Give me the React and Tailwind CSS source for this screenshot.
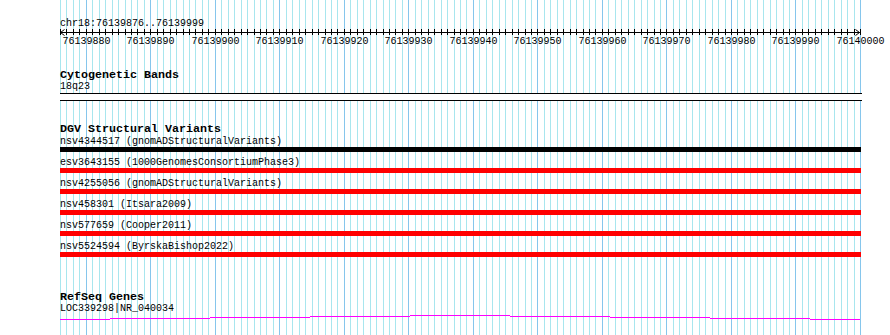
import React from 'react';

const start = 76139876;
const end = 76139999;
const left = 60;
const width = 800;
const bases = end - start + 1;
const pxPerBase = width / bases;

// one grid line per base, darker every 10 bp
const gridLines = Array.from({ length: bases + 1 }, (_, i) => ({
  x: Math.round(left + i * pxPerBase) + 0.5,
  major: (start + i) % 10 === 0,
}));

const rulerLabels = gridLines
  .map((g, i) => ({ ...g, pos: start + i }))
  .filter(g => g.major);

const variants = [
  { name: 'nsv4344517 (gnomADStructuralVariants)', color: 'bg-black' },
  { name: 'esv3643155 (1000GenomesConsortiumPhase3)', color: 'bg-[#ff0000]' },
  { name: 'nsv4255056 (gnomADStructuralVariants)', color: 'bg-[#ff0000]' },
  { name: 'nsv458301 (Itsara2009)', color: 'bg-[#ff0000]' },
  { name: 'nsv577659 (Cooper2011)', color: 'bg-[#ff0000]' },
  { name: 'nsv5524594 (ByrskaBishop2022)', color: 'bg-[#ff0000]' },
];

// gene model steps: [x0, x1, y]
const geneSegments = [
  [0, 50, 5], [50, 150, 4], [150, 250, 3], [250, 350, 2], [350, 450, 1],
  [450, 550, 2], [550, 650, 3], [650, 750, 4], [750, 800, 5],
];

const Grid = () => (
  <svg className="absolute inset-0" width="890" height="335">
    {gridLines.map((g, i) => (
      <line
        key={i}
        x1={g.x} x2={g.x} y1="0" y2="335"
        stroke={g.major ? '#86c6ec' : '#a8e6ee'}
        strokeWidth="1"
      />
    ))}
  </svg>
);

const Ruler = () => (
  <svg width="830" height="17" className="overflow-visible block">
    <line x1="0" x2="800" y1="3.5" y2="3.5" stroke="black" />
    {gridLines.map((g, i) => (
      <line key={i} x1={g.x - left} x2={g.x - left} y1="0" y2="6" stroke="black" />
    ))}
    <polyline points="4.5,0.5 0.5,3.5 4.5,6.5" fill="none" stroke="black" />
    <polyline points="795.5,0.5 799.5,3.5 795.5,6.5" fill="none" stroke="black" />
    {rulerLabels.map(l => (
      <text key={l.pos} x={l.x - left} y="15" textAnchor="middle" fill="black" fontSize="10">
        {l.pos}
      </text>
    ))}
  </svg>
);

export default function App() {
  return (
    <div className="relative w-[890px] h-[335px] bg-white overflow-hidden font-['Liberation_Mono',monospace] text-black">
      <Grid />
      <div className="relative pl-[60px] pt-[18px]">
        <div className="text-[10px] leading-[11px]">chr18:76139876..76139999</div>
        <Ruler />

        <div className="mt-[23px] text-[11.67px] leading-[12px] font-bold">Cytogenetic Bands</div>
        <div className="text-[10px] leading-[11px]">18q23</div>
        <div className="mt-[1px] h-[8px] w-[802px] border-y border-black bg-white" />

        <div className="mt-[22px] text-[11.67px] leading-[12px] font-bold">DGV Structural Variants</div>
        <div className="pt-[1px]">
          {variants.map(v => (
            <div key={v.name} className="mb-[5px]">
              <div className="text-[10px] leading-[11px] whitespace-nowrap">{v.name}</div>
              <div className={`h-[5px] w-[801px] ${v.color}`} />
            </div>
          ))}
        </div>

        <div className="mt-[34px] text-[11.67px] leading-[12px] font-bold">RefSeq Genes</div>
        <div className="text-[10px] leading-[11px]">LOC339298|NR_040034</div>
        <svg width="801" height="8" className="block">
          {geneSegments.map(([x0, x1, y], i) => (
            <rect key={i} x={x0} y={y} width={x1 - x0} height="1" fill="#ff00ff" />
          ))}
        </svg>
      </div>
    </div>
  );
}
